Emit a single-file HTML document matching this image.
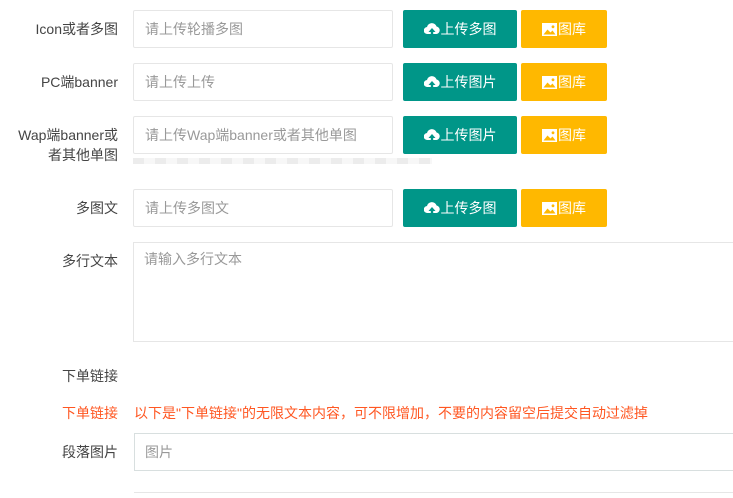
<!DOCTYPE html>
<html><head><meta charset="utf-8"><style>
body{margin:0;width:733px;height:495px;overflow:hidden;background:#fff;font-family:"Liberation Sans","Noto Sans CJK SC",sans-serif;font-size:14px;color:#444;position:relative}
.a{position:absolute}
.lbl{position:absolute;right:615px;text-align:right;line-height:20px;color:#444}
.inp{position:absolute;left:133px;height:36px;border:1px solid #e6e6e6;border-radius:2px;color:#999;line-height:36px;padding-left:11px;box-sizing:content-box;width:247px}
.bt{position:absolute;height:38px;line-height:38px;color:#fff;text-align:center;border-radius:2px;font-size:14px}
.g{left:403px;width:114px;background:#009688}
.y{left:521px;width:86px;background:#FFB800}
.bt svg{vertical-align:-2px;margin-right:1px}
</style></head><body>
<div class="lbl" style="top:19px">Icon或者多图</div>
<div class="inp" style="top:10px">请上传轮播多图</div>
<div class="bt g" style="top:10px"><svg width="16" height="14" viewBox="0 0 16 14"><path d="M4 12H3.5A3.5 3.5 0 0 1 3 5a5 5 0 0 1 9.6-.5A3.8 3.8 0 0 1 12.5 12H12" fill="#fff"/><path d="M8 6l-3.5 4H6.8v4h2.4v-4h2.3z" fill="#009688"/></svg>上传多图</div>
<div class="bt y" style="top:10px"><svg width="15" height="13" viewBox="0 0 15 13"><rect x="0" y="0" width="15" height="13" fill="#fff"/><path d="M1.5 11.5l4-5 3 3 2-2 3 4z" fill="#FFB800"/><circle cx="11" cy="3.8" r="1.4" fill="#FFB800"/></svg>图库</div>

<div class="lbl" style="top:72px">PC端banner</div>
<div class="inp" style="top:63px">请上传上传</div>
<div class="bt g" style="top:63px"><svg width="16" height="14" viewBox="0 0 16 14"><path d="M4 12H3.5A3.5 3.5 0 0 1 3 5a5 5 0 0 1 9.6-.5A3.8 3.8 0 0 1 12.5 12H12" fill="#fff"/><path d="M8 6l-3.5 4H6.8v4h2.4v-4h2.3z" fill="#009688"/></svg>上传图片</div>
<div class="bt y" style="top:63px"><svg width="15" height="13" viewBox="0 0 15 13"><rect x="0" y="0" width="15" height="13" fill="#fff"/><path d="M1.5 11.5l4-5 3 3 2-2 3 4z" fill="#FFB800"/><circle cx="11" cy="3.8" r="1.4" fill="#FFB800"/></svg>图库</div>

<div class="lbl" style="top:125px">Wap端banner或<br>者其他单图</div>
<div class="inp" style="top:116px">请上传Wap端banner或者其他单图</div>
<div class="bt g" style="top:116px"><svg width="16" height="14" viewBox="0 0 16 14"><path d="M4 12H3.5A3.5 3.5 0 0 1 3 5a5 5 0 0 1 9.6-.5A3.8 3.8 0 0 1 12.5 12H12" fill="#fff"/><path d="M8 6l-3.5 4H6.8v4h2.4v-4h2.3z" fill="#009688"/></svg>上传图片</div>
<div class="bt y" style="top:116px"><svg width="15" height="13" viewBox="0 0 15 13"><rect x="0" y="0" width="15" height="13" fill="#fff"/><path d="M1.5 11.5l4-5 3 3 2-2 3 4z" fill="#FFB800"/><circle cx="11" cy="3.8" r="1.4" fill="#FFB800"/></svg>图库</div>
<div class="a" style="left:133px;top:158px;width:299px;height:6px;background:repeating-linear-gradient(90deg,#ececec 0 11px,#f7f7f7 11px 22px)"></div>

<div class="lbl" style="top:198px">多图文</div>
<div class="inp" style="top:189px">请上传多图文</div>
<div class="bt g" style="top:189px"><svg width="16" height="14" viewBox="0 0 16 14"><path d="M4 12H3.5A3.5 3.5 0 0 1 3 5a5 5 0 0 1 9.6-.5A3.8 3.8 0 0 1 12.5 12H12" fill="#fff"/><path d="M8 6l-3.5 4H6.8v4h2.4v-4h2.3z" fill="#009688"/></svg>上传多图</div>
<div class="bt y" style="top:189px"><svg width="15" height="13" viewBox="0 0 15 13"><rect x="0" y="0" width="15" height="13" fill="#fff"/><path d="M1.5 11.5l4-5 3 3 2-2 3 4z" fill="#FFB800"/><circle cx="11" cy="3.8" r="1.4" fill="#FFB800"/></svg>图库</div>

<div class="lbl" style="top:251px">多行文本</div>
<div class="a" style="left:133px;top:242px;width:620px;height:100px;border:1px solid #e6e6e6;color:#999;padding:6px 10px;box-sizing:border-box">请输入多行文本</div>

<div class="lbl" style="top:366px">下单链接</div>
<div class="lbl" style="top:403px;color:#FF5722">下单链接</div>
<div class="a" style="left:134px;top:403px;line-height:20px;color:#FF5722">以下是"下单链接"的无限文本内容，可不限增加，不要的内容留空后提交自动过滤掉</div>

<div class="lbl" style="top:442px">段落图片</div>
<div class="a" style="left:134px;top:433px;width:620px;height:38px;border:1px solid #d8dfdf;box-sizing:border-box;color:#999;line-height:36px;padding-left:10px">图片</div>
<div class="a" style="left:134px;top:492px;width:620px;height:5px;border-top:1px solid #e6e6e6"></div>
</body></html>
